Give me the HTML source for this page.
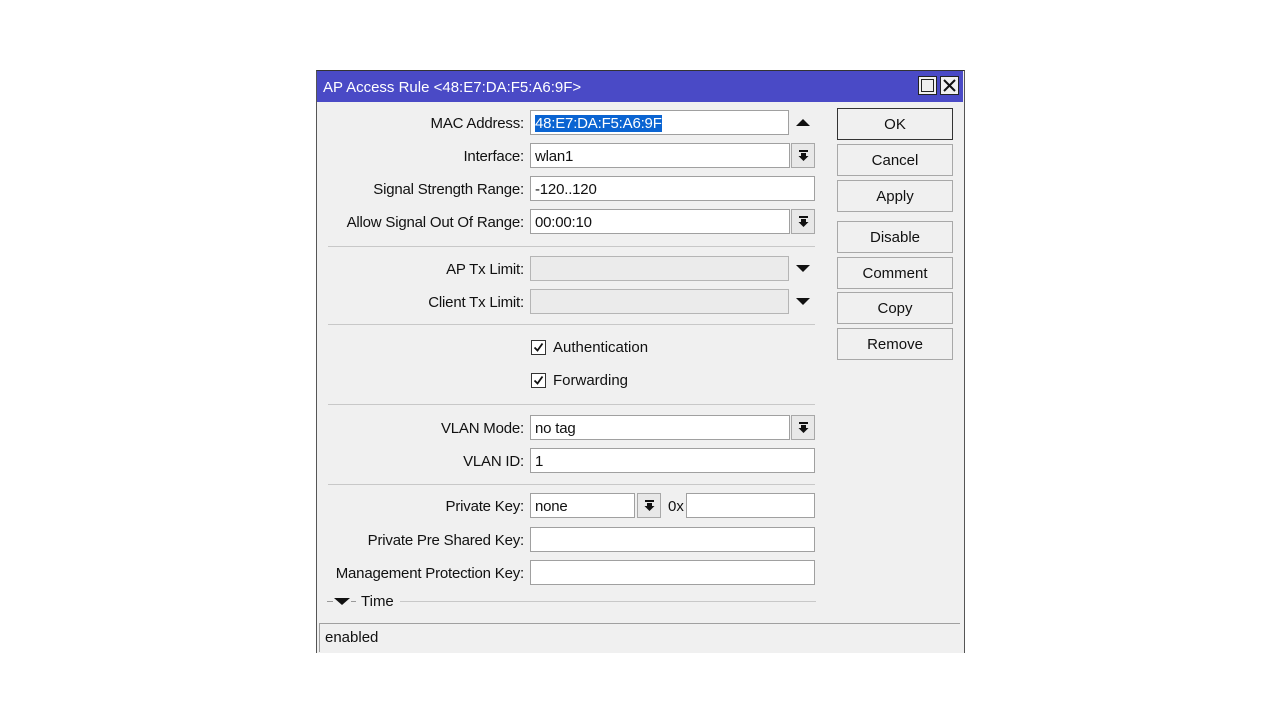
<!DOCTYPE html>
<html><head><style>
body{margin:0;width:1280px;height:720px;background:#fff;position:relative;font-family:"Liberation Sans",Arial,sans-serif;font-size:15px;color:#111;overflow:hidden}
.win{position:absolute;left:316px;top:70px;width:647px;height:582px;background:#f0f0f0;border-left:1px solid #555;border-right:1px solid #555;border-top:1px solid #333}
.title{position:absolute;left:317px;top:71px;width:646px;height:31px;background:#4a4ac6;color:#fff;font-size:15px;line-height:33px}
.title span{margin-left:6px}
.tb{position:absolute;top:5px;width:19px;height:19px;background:#f0f0f0;border:1px solid #222;box-sizing:border-box}
.lbl{position:absolute;right:756px;text-align:right;white-space:nowrap;line-height:24px;margin-top:2px;letter-spacing:-0.2px}
.f{position:absolute;background:#fff;border:1px solid #a0a0a0;box-sizing:border-box;height:25px;line-height:25px;padding-left:4px;white-space:nowrap;letter-spacing:-0.2px}
.dis{background:#ebebeb;border-color:#b5b5b5}
.dd{position:absolute;width:24px;height:25px;box-sizing:border-box;border:1px solid #a8a8a8;background:#e8e8e8}
.dd svg{position:absolute;left:6px;top:6px}
.sep{position:absolute;left:328px;width:487px;height:1px;background:#c8c8c8}
.btn{position:absolute;left:837px;width:116px;height:32px;box-sizing:border-box;border:1px solid #a8a8a8;background:#f0f0f0;text-align:center;line-height:32px}
.cb{position:absolute;left:531px;width:15px;height:15px;box-sizing:border-box;border:1px solid #333;background:#fff}
.tri{position:absolute;width:0;height:0;border-left:7px solid transparent;border-right:7px solid transparent}
</style></head><body>
<div class="win"></div>
<div class="title"><span>AP Access Rule &lt;48:E7:DA:F5:A6:9F&gt;</span>
<div class="tb" style="left:601px"><div style="position:absolute;left:2px;top:2px;width:13px;height:13px;border:1px solid #222;box-sizing:border-box"></div></div>
<div class="tb" style="left:623px"><svg width="17" height="17" style="position:absolute;left:0;top:0"><path d="M3 3L14 14M14 3L3 14" stroke="#111" stroke-width="2"/></svg></div>
</div>

<div class="lbl" style="top:110px">MAC Address:</div>
<div class="f" style="left:530px;top:110px;width:259px"><span style="background:#0a64d2;color:#fff">48:E7:DA:F5:A6:9F</span></div>
<div class="tri" style="left:796px;top:119px;border-bottom:7px solid #111"></div>

<div class="lbl" style="top:143px">Interface:</div>
<div class="f" style="left:530px;top:143px;width:260px">wlan1</div>
<div class="dd" style="left:791px;top:143px"><svg width="11" height="11"><rect x="1" y="0" width="9" height="2" fill="#111"/><path d="M3 3H8V6H10.5L5.5 11L0.5 6H3Z" fill="#111"/></svg></div>

<div class="lbl" style="top:176px">Signal Strength Range:</div>
<div class="f" style="left:530px;top:176px;width:285px">-120..120</div>

<div class="lbl" style="top:209px">Allow Signal Out Of Range:</div>
<div class="f" style="left:530px;top:209px;width:260px">00:00:10</div>
<div class="dd" style="left:791px;top:209px"><svg width="11" height="11"><rect x="1" y="0" width="9" height="2" fill="#111"/><path d="M3 3H8V6H10.5L5.5 11L0.5 6H3Z" fill="#111"/></svg></div>

<div class="sep" style="top:246px"></div>

<div class="lbl" style="top:256px">AP Tx Limit:</div>
<div class="f dis" style="left:530px;top:256px;width:259px"></div>
<div class="tri" style="left:796px;top:265px;border-top:7px solid #111"></div>
<div class="lbl" style="top:289px">Client Tx Limit:</div>
<div class="f dis" style="left:530px;top:289px;width:259px"></div>
<div class="tri" style="left:796px;top:298px;border-top:7px solid #111"></div>

<div class="sep" style="top:324px"></div>

<div class="cb" style="top:340px"><svg width="13" height="13"><path d="M2.5 6.5L5.5 9.5L10.5 2.5" stroke="#111" stroke-width="1.8" fill="none"/></svg></div><div style="position:absolute;left:553px;top:338px;line-height:20px">Authentication</div>
<div class="cb" style="top:373px"><svg width="13" height="13"><path d="M2.5 6.5L5.5 9.5L10.5 2.5" stroke="#111" stroke-width="1.8" fill="none"/></svg></div><div style="position:absolute;left:553px;top:371px;line-height:20px">Forwarding</div>

<div class="sep" style="top:404px"></div>

<div class="lbl" style="top:415px">VLAN Mode:</div>
<div class="f" style="left:530px;top:415px;width:260px">no tag</div>
<div class="dd" style="left:791px;top:415px"><svg width="11" height="11"><rect x="1" y="0" width="9" height="2" fill="#111"/><path d="M3 3H8V6H10.5L5.5 11L0.5 6H3Z" fill="#111"/></svg></div>
<div class="lbl" style="top:448px">VLAN ID:</div>
<div class="f" style="left:530px;top:448px;width:285px">1</div>

<div class="sep" style="top:484px"></div>

<div class="lbl" style="top:493px">Private Key:</div>
<div class="f" style="left:530px;top:493px;width:105px">none</div>
<div class="dd" style="left:637px;top:493px"><svg width="11" height="11"><rect x="1" y="0" width="9" height="2" fill="#111"/><path d="M3 3H8V6H10.5L5.5 11L0.5 6H3Z" fill="#111"/></svg></div>
<div style="position:absolute;left:668px;top:494px;line-height:26px">0x</div>
<div class="f" style="left:686px;top:493px;width:129px"></div>
<div class="lbl" style="top:527px">Private Pre Shared Key:</div>
<div class="f" style="left:530px;top:527px;width:285px"></div>
<div class="lbl" style="top:560px">Management Protection Key:</div>
<div class="f" style="left:530px;top:560px;width:285px"></div>

<div style="position:absolute;left:327px;top:601px;width:6px;height:1px;background:#999"></div>
<div class="tri" style="left:334px;top:598px;border-left-width:8px;border-right-width:8px;border-top:7px solid #111"></div>
<div style="position:absolute;left:351px;top:601px;width:5px;height:1px;background:#999"></div>
<div style="position:absolute;left:361px;top:592px;line-height:20px">Time</div>
<div style="position:absolute;left:400px;top:601px;width:416px;height:1px;background:#c8c8c8"></div>

<div style="position:absolute;left:319px;top:623px;width:641px;height:29px;border-top:1px solid #a0a0a0;border-left:1px solid #a0a0a0;box-sizing:border-box;line-height:28px;padding-left:5px">enabled</div>

<div class="btn" style="top:108px;border-color:#333">OK</div>
<div class="btn" style="top:144px">Cancel</div>
<div class="btn" style="top:180px">Apply</div>
<div class="btn" style="top:221px">Disable</div>
<div class="btn" style="top:257px">Comment</div>
<div class="btn" style="top:292px">Copy</div>
<div class="btn" style="top:328px">Remove</div>
</body></html>
